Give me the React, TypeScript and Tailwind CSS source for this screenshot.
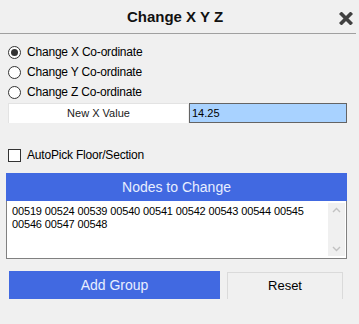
import { useState } from 'react';

const nodes = ['00519', '00524', '00539', '00540', '00541', '00542', '00543', '00544', '00545', '00546', '00547', '00548'];

function Radio({ checked, label, onClick }: { checked: boolean; label: string; onClick: () => void }) {
  return (
    <div className="h-[20px] flex items-center gap-[6px] cursor-default" onClick={onClick}>
      <div className="w-[13px] h-[13px] rounded-full border border-[#333] bg-white flex items-center justify-center">
        {checked && <div className="w-[7px] h-[7px] rounded-full bg-[#333]" />}
      </div>
      <span className="text-[12px] text-black tracking-[-0.2px]">{label}</span>
    </div>
  );
}

export default function App() {
  const [axis, setAxis] = useState('X');
  const [value, setValue] = useState('14.25');
  const [autoPick, setAutoPick] = useState(false);

  return (
    <div className="w-[359px] h-[324px] bg-[#f0f0f0] font-['Liberation_Sans',Arial,sans-serif] overflow-hidden">
      {/* title bar */}
      <div className="relative h-[34px] mr-[3px] border-b border-[#a0a0a0] flex items-center justify-center">
        <span className="text-[15px] font-semibold text-[#111] pt-[1px] -ml-[6px]">Change X Y Z</span>
        <svg className="absolute right-[3px] top-[12px]" width="14" height="13" viewBox="0 0 14 13">
          <path d="M2.5 2 L11.5 11 M11.5 2 L2.5 11" stroke="#404040" strokeWidth="3.6" strokeLinecap="square" />
        </svg>
      </div>

      <div className="px-[8px] pt-[8px]">
        {['X', 'Y', 'Z'].map((a) => (
          <Radio key={a} checked={axis === a} label={`Change ${a} Co-ordinate`} onClick={() => setAxis(a)} />
        ))}

        <div className="flex items-center mt-[1px] h-[20px]">
          <div className="w-[180px] h-[20px] bg-white border-t border-l border-[#e3e3e3] flex items-center justify-center text-[11px] text-[#1a1a1a]">
            New {axis} Value
          </div>
          <div className="ml-[1px] w-[158px] h-[20px] bg-[#a8d2ff] border border-[#646464] flex items-center pl-[2px]">
            <input
              value={value}
              onChange={(e) => setValue(e.target.value)}
              className="w-full bg-transparent outline-none text-[11px] text-black p-0"
            />
          </div>
        </div>

        <div className="h-[20px] mt-[22px] flex items-center gap-[6px]" onClick={() => setAutoPick(!autoPick)}>
          <div className="w-[13px] h-[13px] border border-[#333] bg-white flex items-center justify-center text-[10px] leading-none">
            {autoPick && '✓'}
          </div>
          <span className="text-[12px] text-black tracking-[-0.2px]">AutoPick Floor/Section</span>
        </div>
      </div>

      <div className="px-[6px] mr-[6px] mt-[8px]">
        <div className="h-[28px] bg-[#4169e1] flex items-center justify-center text-[14px] text-[#e8eeff]">
          Nodes to Change
        </div>
        <div className="h-[58px] bg-white border border-[#808080] border-t-0 flex">
          <div className="flex-1 pl-[5px] pt-[4px] pr-[6px] text-[11px] leading-[13px] tracking-[-0.15px] text-black">
            {nodes.join(' ')}
          </div>
          <div className="w-[17px] my-[2px] mr-px bg-[#f0f0f0] flex flex-col items-center justify-between py-[4px]">
            <svg width="9" height="6" viewBox="0 0 9 6">
              <path d="M1 5 L4.5 1.5 L8 5" stroke="#c2c2c2" strokeWidth="1.4" fill="none" />
            </svg>
            <svg width="9" height="6" viewBox="0 0 9 6">
              <path d="M1 1 L4.5 4.5 L8 1" stroke="#c2c2c2" strokeWidth="1.4" fill="none" />
            </svg>
          </div>
        </div>
      </div>

      <div className="flex pl-[9px] mt-[12px] gap-[7px]">
        <button className="w-[211px] h-[28px] bg-[#4169e1] text-[14px] text-[#e8eeff]">Add Group</button>
        <button className="w-[116px] h-[27px] mt-[1px] bg-[#f0f0f0] border border-b-0 border-[#dadada] text-[13px] text-black">
          Reset
        </button>
      </div>
    </div>
  );
}
